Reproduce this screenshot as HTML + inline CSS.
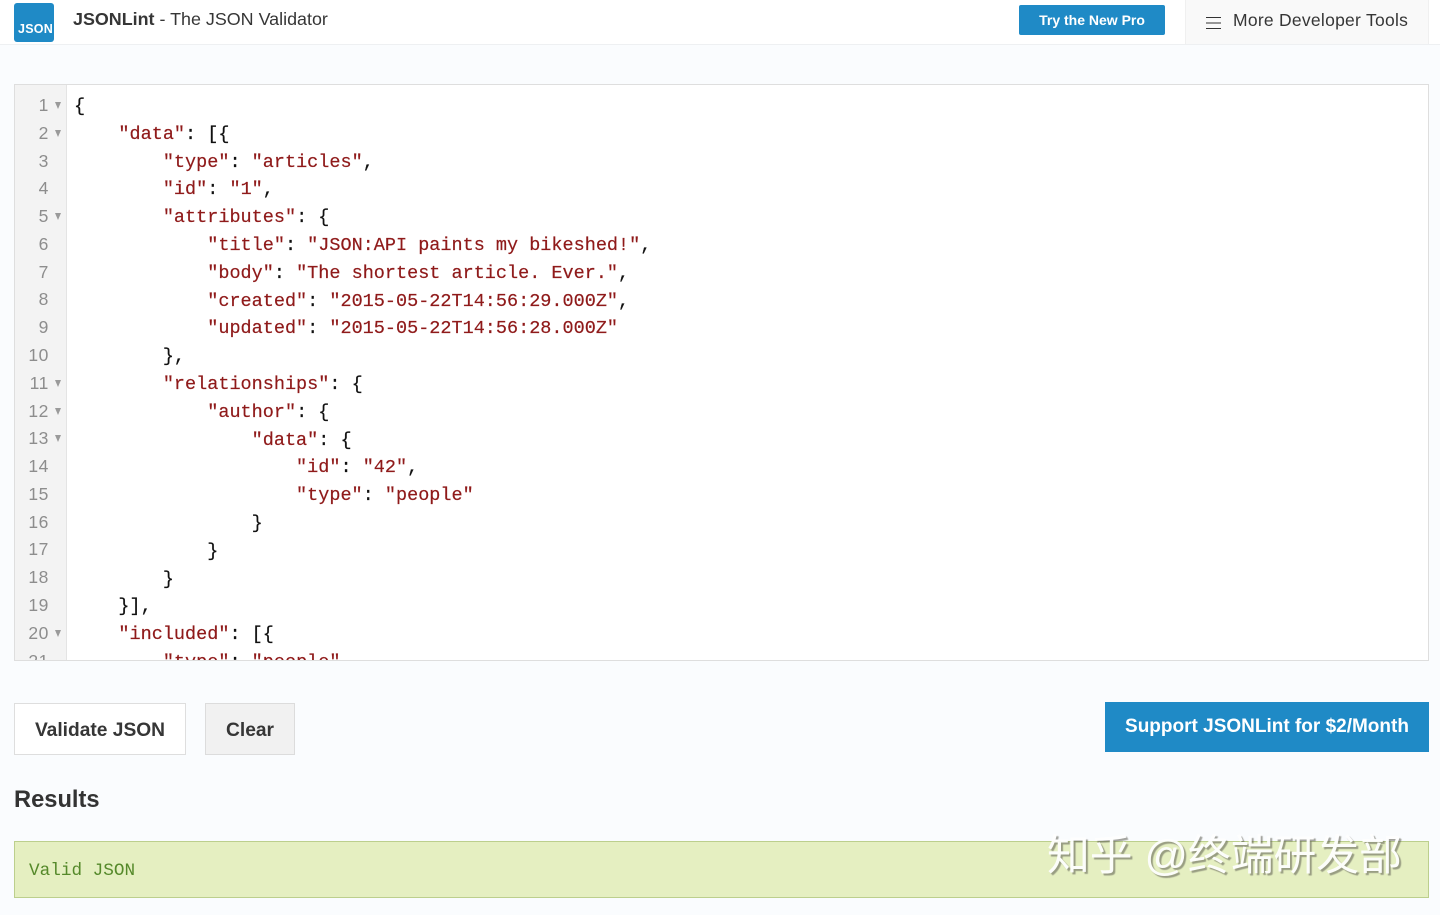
<!DOCTYPE html>
<html lang="en"><head><meta charset="utf-8"><title>JSONLint</title>
<style>
html,body{margin:0;padding:0;width:1440px;height:915px;overflow:hidden;background:#fafcfe;font-family:"Liberation Sans",sans-serif;color:#363636}
.a{position:absolute;white-space:pre}
#hdr{position:absolute;left:0;top:0;width:1440px;height:44px;background:#fff;border-bottom:1px solid #eef0f2}
#logo{position:absolute;left:14px;top:3px;width:40px;height:39px;background:#1f8ac6;border-radius:3px;color:#fff;font-weight:bold;font-size:12.5px}
#logo span{position:absolute;left:4px;top:19px;letter-spacing:.25px}
#more{position:absolute;left:1185px;top:0;width:244px;height:44px;background:#f9f9f9;border-left:1px solid #f0f0f0;border-right:1px solid #f0f0f0;box-sizing:border-box}
#ed{position:absolute;left:14px;top:84px;width:1415px;height:577px;box-sizing:border-box;background:#fff;border:1px solid #dedede;overflow:hidden}
#gut{position:absolute;left:0;top:0;width:51px;height:100%;background:#f3f3f3;border-right:1px solid #e4e4e4}
.n{position:absolute;width:34px;text-align:right;left:0;font:17.5px/28px "Liberation Sans",sans-serif;color:#8d8d8d;letter-spacing:.6px}
.t{position:absolute;left:40px;width:0;height:0;border-left:3.5px solid transparent;border-right:3.5px solid transparent;border-top:7px solid #9a9a9a}
pre{position:absolute;left:59px;top:8px;margin:0;font:18.5px/27.79px "Liberation Mono",monospace;color:#111;-webkit-text-stroke:.2px}
pre b{font-weight:normal;color:#8f1a1a}
.btn{position:absolute;box-sizing:border-box;font-weight:bold;font-size:19.2px;text-align:center;color:#363636}
</style></head><body>
<div id="hdr">
<div id="logo"><span>JSON</span></div>
<div class="a" style="left:73px;top:9px;font-size:17.9px;line-height:20px"><span style="font-weight:bold">JSONLint</span> - The JSON Validator</div>
<div class="a" style="left:1019px;top:5px;width:146px;height:30px;background:#1f8ac6;border-radius:2px;color:#fff;font-weight:bold;font-size:14px;line-height:30px;text-align:center">Try the New Pro</div>
<div id="more">
<svg style="position:absolute;left:20px;top:16px" width="16" height="14" viewBox="0 0 16 14"><path d="M0 1.5H15M0 7H15M0 12.5H15" stroke="#333" stroke-width="1.1" fill="none"/></svg>
<div class="a" style="left:47px;top:10px;font-size:17.5px;line-height:20px;letter-spacing:.26px">More Developer Tools</div>
</div>
</div>
<div id="ed">
<div id="gut">
<div class="n" style="top:6px">1</div><div class="t" style="top:17px"></div>
<div class="n" style="top:34px">2</div><div class="t" style="top:45px"></div>
<div class="n" style="top:62px">3</div>
<div class="n" style="top:89px">4</div>
<div class="n" style="top:117px">5</div><div class="t" style="top:128px"></div>
<div class="n" style="top:145px">6</div>
<div class="n" style="top:173px">7</div>
<div class="n" style="top:200px">8</div>
<div class="n" style="top:228px">9</div>
<div class="n" style="top:256px">10</div>
<div class="n" style="top:284px">11</div><div class="t" style="top:295px"></div>
<div class="n" style="top:312px">12</div><div class="t" style="top:323px"></div>
<div class="n" style="top:339px">13</div><div class="t" style="top:350px"></div>
<div class="n" style="top:367px">14</div>
<div class="n" style="top:395px">15</div>
<div class="n" style="top:423px">16</div>
<div class="n" style="top:450px">17</div>
<div class="n" style="top:478px">18</div>
<div class="n" style="top:506px">19</div>
<div class="n" style="top:534px">20</div><div class="t" style="top:545px"></div>
<div class="n" style="top:562px">21</div>
</div>
<pre>{
    <b>"data"</b>: [{
        <b>"type"</b>: <b>"articles"</b>,
        <b>"id"</b>: <b>"1"</b>,
        <b>"attributes"</b>: {
            <b>"title"</b>: <b>"JSON:API paints my bikeshed!"</b>,
            <b>"body"</b>: <b>"The shortest article. Ever."</b>,
            <b>"created"</b>: <b>"2015-05-22T14:56:29.000Z"</b>,
            <b>"updated"</b>: <b>"2015-05-22T14:56:28.000Z"</b>
        },
        <b>"relationships"</b>: {
            <b>"author"</b>: {
                <b>"data"</b>: {
                    <b>"id"</b>: <b>"42"</b>,
                    <b>"type"</b>: <b>"people"</b>
                }
            }
        }
    }],
    <b>"included"</b>: [{
        <b>"type"</b>: <b>"people"</b>,</pre>
</div>
<div class="btn" style="left:14px;top:703px;width:172px;height:52px;background:#fff;border:1px solid #dedede;line-height:52px;padding-top:1px">Validate JSON</div>
<div class="btn" style="left:205px;top:703px;width:90px;height:52px;background:#f1f1f1;border:1px solid #dcdcdc;line-height:52px;padding-top:1px">Clear</div>
<div class="btn" style="left:1105px;top:702px;width:324px;height:50px;background:#1f8ac6;color:#fff;line-height:50px;font-size:19px">Support JSONLint for $2/Month</div>
<div class="a" style="left:14px;top:785px;font-size:23.7px;line-height:30px;font-weight:bold;color:#333">Results</div>
<div style="position:absolute;left:14px;top:841px;width:1415px;height:57px;box-sizing:border-box;background:#e5efc1;border:1px solid #bccf8d"></div>
<div class="a" style="left:29px;top:861px;font:17.7px/20px 'Liberation Mono',monospace;color:#55892a">Valid JSON</div>
<div class="a" style="left:1047px;top:830px;font:42.8px/52px 'Liberation Sans','Noto Sans CJK SC',sans-serif;color:#fff;text-shadow:2px 2px 1px rgba(90,90,80,.6);opacity:.92">知乎 @终端研发部</div>
</body></html>
